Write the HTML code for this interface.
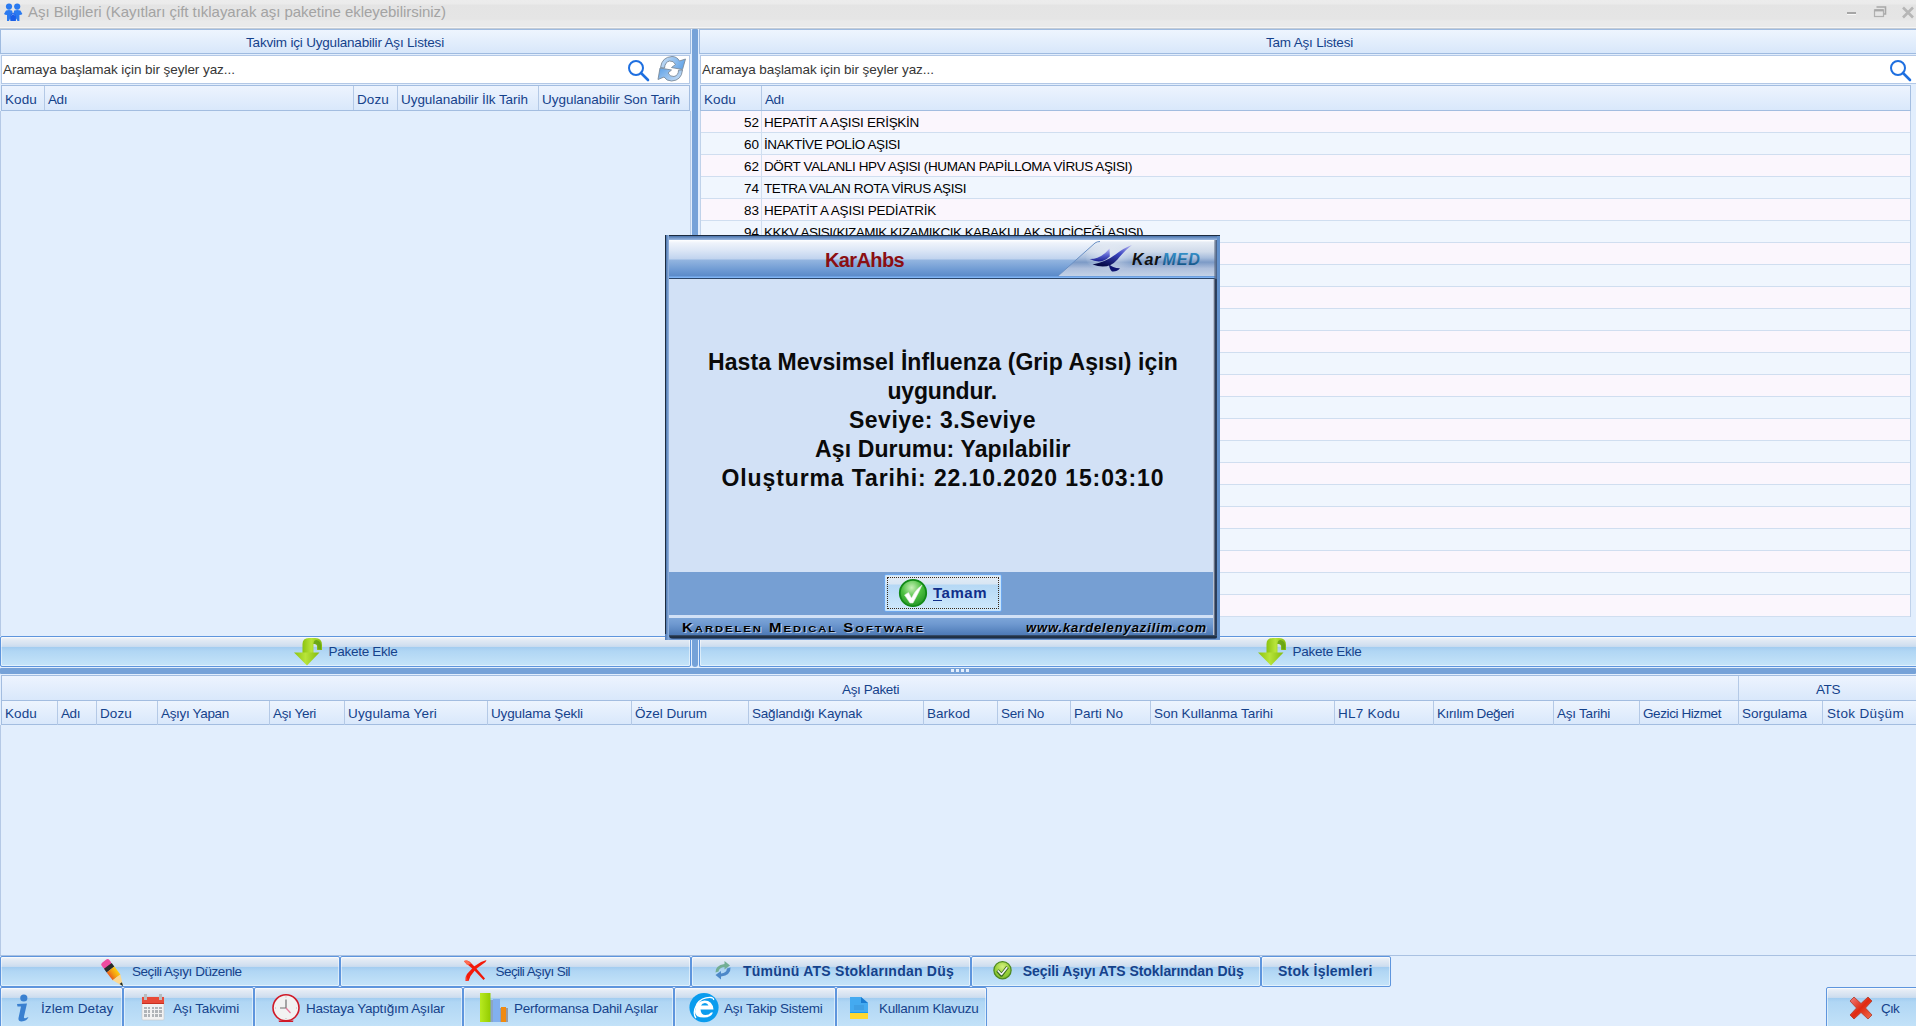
<!DOCTYPE html>
<html><head><meta charset="utf-8"><style>
*{margin:0;padding:0;box-sizing:border-box}
html,body{width:1918px;height:1026px;overflow:hidden;background:#ffffff;font-family:"Liberation Sans",sans-serif;}
.a{position:absolute}
.tx{white-space:nowrap}
#app{position:absolute;left:0;top:0;width:1916px;height:1026px;background:#e2eefd;overflow:hidden}
.hdr{background:linear-gradient(#eef5fe,#d8e7fa);border:1px solid #9fbbe0;}
.search{background:#fff;border:1px solid #b3c8e6;}
.gh{background:linear-gradient(#edf4fe,#d9e8fb);border:1px solid #a3bde0;}
.sep{position:absolute;width:1px;background:#b4c9e6}
.btn{border:1px solid #5e95dd;border-radius:2px;background:linear-gradient(#f2f5fa 0,#e2eaf4 3px,#d2e0f0 8px,#c6daef 10px,#a2ccf0 10px,#b0d6f4 14px,#c6e4f9 100%);box-shadow:inset 0 0 0 1px rgba(255,255,255,0.5)}
.split{background:#76a2d8}
</style></head><body><div id="app">
<div class="a" style="left:0px;top:0px;width:1916px;height:29px;background:linear-gradient(#ececec 0px,#ebebeb 4px,#e4e4e4 5px,#e5e5e5 19px,#eaeaea 21px,#eaeaea 27px,#f5f5f5 27px,#f5f5f5 28px,#c4ccd6 28px)"></div>
<svg class="a" style="left:2px;top:2px" width="24" height="22" viewBox="0 0 24 22">
<g fill="#2a7af0">
<circle cx="7" cy="4.6" r="3.1"/><circle cx="15.2" cy="4.6" r="3.1"/>
<path d="M2 12 L4 8.5 Q7 7.6 10 8.5 L10.5 10 L10.5 19 L8.8 19 L8 16.5 L7 19 L5 19 L5 13 L3.2 12.8Z"/>
<path d="M20.4 12 L18.4 8.5 Q15.2 7.6 12.2 8.5 L11.8 10 L11.8 19 L13.4 19 L14.4 16.5 L15.4 19 L17.4 19 L17.4 13 L19.2 12.8Z"/>
<path d="M8.5 13 L11.1 10.5 L13.8 13 L13.8 19 L8.5 19Z" fill="#1a5ee8"/>
<path d="M9.5 13.5 L11.1 11.8 L12.8 13.5" fill="none" stroke="#9ac0f8" stroke-width="0.6"/>
</g></svg>
<div class="a tx" style="left:28px;top:4.30px;font-size:15px;line-height:15px;color:#a3a3a3;font-weight:normal;font-style:normal;letter-spacing:-0.043px;">Aşı Bilgileri (Kayıtları çift tıklayarak aşı paketine ekleyebilirsiniz)</div>
<div class="a" style="left:1847px;top:12px;width:9px;height:2px;background:#a6a6a6"></div>
<div class="a" style="left:1847px;top:14px;width:9px;height:1px;background:#f8f8f8"></div>
<svg class="a" style="left:1873px;top:6px" width="14" height="12" viewBox="0 0 14 12"><path d="M3.5 1 L12.5 1 L12.5 8 L10.5 8" fill="none" stroke="#a8a8a8" stroke-width="1.6"/><rect x="1.5" y="4" width="9" height="6.5" fill="none" stroke="#b0b0b0" stroke-width="1.2"/><rect x="1.5" y="3.2" width="9" height="2.2" fill="#a8a8a8"/></svg>
<svg class="a" style="left:1901px;top:6px" width="14" height="13" viewBox="0 0 14 13"><path d="M2 1.5 L12 11.5 M12 1.5 L2 11.5" stroke="#b6b6b6" stroke-width="2.6"/></svg>
<div class="a hdr" style="left:0px;top:29px;width:691px;height:25px;"></div>
<div class="a tx" style="left:246px;top:35.57px;font-size:13.5px;line-height:13.5px;color:#15428b;font-weight:normal;font-style:normal;letter-spacing:-0.191px;">Takvim içi Uygulanabilir Aşı Listesi</div>
<div class="a search" style="left:1px;top:55px;width:689px;height:29px;"></div>
<div class="a tx" style="left:3px;top:62.57px;font-size:13.5px;line-height:13.5px;color:#363636;font-weight:normal;font-style:normal;letter-spacing:-0.056px;">Aramaya başlamak için bir şeyler yaz...</div>
<svg class="a" style="left:627px;top:59px" width="24" height="24" viewBox="0 0 24 24">
<circle cx="9" cy="9" r="7" fill="none" stroke="#1e6fe0" stroke-width="2"/>
<path d="M14 14 L21 21" stroke="#1e6fe0" stroke-width="2.6" stroke-linecap="round"/></svg>
<svg class="a" style="left:652px;top:52px" width="40" height="34" viewBox="0 0 40 34">
<defs><linearGradient id="rg" x1="0" y1="0" x2="1" y2="0.3"><stop offset="0" stop-color="#cfe2f6"/><stop offset="1" stop-color="#6aa8e8"/></linearGradient>
<linearGradient id="rg2" x1="1" y1="1" x2="0" y2="0.3"><stop offset="0" stop-color="#cfe2f6"/><stop offset="1" stop-color="#6aa8e8"/></linearGradient></defs>
<path d="M8.5 15.5 Q10 5 20 4.5 Q25 4.5 27.5 9 L33.5 7 L30.5 17.5 L19.5 15.5 L23.5 12.5 Q21.5 8.5 17.5 9 Q13 10 12.5 16 Z" fill="url(#rg)" stroke="#7a8a9a" stroke-width="0.9"/>
<path d="M30.5 18 Q29.5 28.5 19.5 29 Q14.5 29 12 25 L6 27.5 L8 16 L19.5 18 L16 21 Q18 25 22 24.5 Q26.5 23.5 26.5 18.2 Z" fill="url(#rg2)" stroke="#7a8a9a" stroke-width="0.9"/>
</svg>
<div class="a gh" style="left:1px;top:85px;width:689px;height:26px"><div class="sep" style="left:42px;top:0;height:24px"></div><div class="sep" style="left:351px;top:0;height:24px"></div><div class="sep" style="left:395px;top:0;height:24px"></div><div class="sep" style="left:536px;top:0;height:24px"></div></div>
<div class="a tx" style="left:5px;top:92.57px;font-size:13.5px;line-height:13.5px;color:#15428b;font-weight:normal;font-style:normal;letter-spacing:0.113px;">Kodu</div>
<div class="a tx" style="left:48px;top:92.57px;font-size:13.5px;line-height:13.5px;color:#15428b;font-weight:normal;font-style:normal;letter-spacing:-0.422px;">Adı</div>
<div class="a tx" style="left:357px;top:92.57px;font-size:13.5px;line-height:13.5px;color:#15428b;font-weight:normal;font-style:normal;letter-spacing:0.117px;">Dozu</div>
<div class="a tx" style="left:401px;top:92.57px;font-size:13.5px;line-height:13.5px;color:#15428b;font-weight:normal;font-style:normal;letter-spacing:-0.049px;">Uygulanabilir İlk Tarih</div>
<div class="a tx" style="left:542px;top:92.57px;font-size:13.5px;line-height:13.5px;color:#15428b;font-weight:normal;font-style:normal;letter-spacing:-0.029px;">Uygulanabilir Son Tarih</div>
<div class="a" style="left:0px;top:111px;width:1px;height:525px;background:#b5c9e6"></div>
<div class="a" style="left:690px;top:111px;width:1px;height:525px;background:#b8cce6"></div>
<div class="a" style="left:692px;top:29px;width:6px;height:638px;background:#76a2d8;border-radius:1px 1px 3px 3px"></div>
<div class="a hdr" style="left:699px;top:29px;width:1218px;height:25px;border-right:none"></div>
<div class="a tx" style="left:1266px;top:35.57px;font-size:13.5px;line-height:13.5px;color:#15428b;font-weight:normal;font-style:normal;letter-spacing:-0.203px;">Tam Aşı Listesi</div>
<div class="a search" style="left:700px;top:55px;width:1217px;height:29px;border-right:none"></div>
<div class="a tx" style="left:702px;top:62.57px;font-size:13.5px;line-height:13.5px;color:#363636;font-weight:normal;font-style:normal;letter-spacing:-0.056px;">Aramaya başlamak için bir şeyler yaz...</div>
<svg class="a" style="left:1889px;top:59px" width="24" height="24" viewBox="0 0 24 24">
<circle cx="9" cy="9" r="7" fill="none" stroke="#1e6fe0" stroke-width="2"/>
<path d="M14 14 L21 21" stroke="#1e6fe0" stroke-width="2.6" stroke-linecap="round"/></svg>
<div class="a gh" style="left:700px;top:85px;width:1211px;height:26px"><div class="sep" style="left:60px;top:0;height:24px"></div></div>
<div class="a tx" style="left:704px;top:92.57px;font-size:13.5px;line-height:13.5px;color:#15428b;font-weight:normal;font-style:normal;letter-spacing:0.113px;">Kodu</div>
<div class="a tx" style="left:765px;top:92.57px;font-size:13.5px;line-height:13.5px;color:#15428b;font-weight:normal;font-style:normal;letter-spacing:-0.422px;">Adı</div>
<div class="a" style="left:700px;top:111px;width:1px;height:506px;background:#c0d2ea"></div>
<div class="a" style="left:1910px;top:111px;width:1px;height:506px;background:#c0d2ea"></div>
<div class="a" style="left:701px;top:111px;width:1209px;height:21px;background:#fbf6fd"></div>
<div class="a" style="left:701px;top:132px;width:1209px;height:1px;background:#d0def0"></div>
<div class="a" style="left:761px;top:111px;width:1px;height:21px;background:#d0def0"></div>
<div class="a tx" style="left:743.96875px;top:115.57px;font-size:13.5px;line-height:13.5px;color:#000;font-weight:normal;font-style:normal;letter-spacing:0.000px;">52</div>
<div class="a tx" style="left:764px;top:115.57px;font-size:13.5px;line-height:13.5px;color:#000;font-weight:normal;font-style:normal;letter-spacing:-0.272px;">HEPATİT A AŞISI ERİŞKİN</div>
<div class="a" style="left:701px;top:133px;width:1209px;height:21px;background:#f0f6fe"></div>
<div class="a" style="left:701px;top:154px;width:1209px;height:1px;background:#d0def0"></div>
<div class="a" style="left:761px;top:133px;width:1px;height:21px;background:#d0def0"></div>
<div class="a tx" style="left:743.96875px;top:137.57px;font-size:13.5px;line-height:13.5px;color:#000;font-weight:normal;font-style:normal;letter-spacing:0.000px;">60</div>
<div class="a tx" style="left:764px;top:137.57px;font-size:13.5px;line-height:13.5px;color:#000;font-weight:normal;font-style:normal;letter-spacing:-0.401px;">İNAKTİVE POLİO AŞISI</div>
<div class="a" style="left:701px;top:155px;width:1209px;height:21px;background:#fbf6fd"></div>
<div class="a" style="left:701px;top:176px;width:1209px;height:1px;background:#d0def0"></div>
<div class="a" style="left:761px;top:155px;width:1px;height:21px;background:#d0def0"></div>
<div class="a tx" style="left:743.96875px;top:159.57px;font-size:13.5px;line-height:13.5px;color:#000;font-weight:normal;font-style:normal;letter-spacing:0.000px;">62</div>
<div class="a tx" style="left:764px;top:159.57px;font-size:13.5px;line-height:13.5px;color:#000;font-weight:normal;font-style:normal;letter-spacing:-0.391px;">DÖRT VALANLI HPV AŞISI (HUMAN PAPİLLOMA VİRUS AŞISI)</div>
<div class="a" style="left:701px;top:177px;width:1209px;height:21px;background:#f0f6fe"></div>
<div class="a" style="left:701px;top:198px;width:1209px;height:1px;background:#d0def0"></div>
<div class="a" style="left:761px;top:177px;width:1px;height:21px;background:#d0def0"></div>
<div class="a tx" style="left:743.96875px;top:181.57px;font-size:13.5px;line-height:13.5px;color:#000;font-weight:normal;font-style:normal;letter-spacing:0.000px;">74</div>
<div class="a tx" style="left:764px;top:181.57px;font-size:13.5px;line-height:13.5px;color:#000;font-weight:normal;font-style:normal;letter-spacing:-0.376px;">TETRA VALAN ROTA VİRUS AŞISI</div>
<div class="a" style="left:701px;top:199px;width:1209px;height:21px;background:#fbf6fd"></div>
<div class="a" style="left:701px;top:220px;width:1209px;height:1px;background:#d0def0"></div>
<div class="a" style="left:761px;top:199px;width:1px;height:21px;background:#d0def0"></div>
<div class="a tx" style="left:743.96875px;top:203.57px;font-size:13.5px;line-height:13.5px;color:#000;font-weight:normal;font-style:normal;letter-spacing:0.000px;">83</div>
<div class="a tx" style="left:764px;top:203.57px;font-size:13.5px;line-height:13.5px;color:#000;font-weight:normal;font-style:normal;letter-spacing:-0.220px;">HEPATİT A AŞISI PEDİATRİK</div>
<div class="a" style="left:701px;top:221px;width:1209px;height:21px;background:#f0f6fe"></div>
<div class="a" style="left:701px;top:242px;width:1209px;height:1px;background:#d0def0"></div>
<div class="a" style="left:761px;top:221px;width:1px;height:21px;background:#d0def0"></div>
<div class="a tx" style="left:743.96875px;top:225.57px;font-size:13.5px;line-height:13.5px;color:#000;font-weight:normal;font-style:normal;letter-spacing:0.000px;">94</div>
<div class="a tx" style="left:764px;top:225.57px;font-size:13.5px;line-height:13.5px;color:#000;font-weight:normal;font-style:normal;letter-spacing:-0.514px;">KKKV AŞISI(KIZAMIK KIZAMIKÇIK KABAKULAK SUÇİÇEĞİ AŞISI)</div>
<div class="a" style="left:701px;top:243px;width:1209px;height:21px;background:#fbf6fd"></div>
<div class="a" style="left:701px;top:264px;width:1209px;height:1px;background:#d0def0"></div>
<div class="a" style="left:761px;top:243px;width:1px;height:21px;background:#d0def0"></div>
<div class="a" style="left:701px;top:265px;width:1209px;height:21px;background:#f0f6fe"></div>
<div class="a" style="left:701px;top:286px;width:1209px;height:1px;background:#d0def0"></div>
<div class="a" style="left:761px;top:265px;width:1px;height:21px;background:#d0def0"></div>
<div class="a" style="left:701px;top:287px;width:1209px;height:21px;background:#fbf6fd"></div>
<div class="a" style="left:701px;top:308px;width:1209px;height:1px;background:#d0def0"></div>
<div class="a" style="left:761px;top:287px;width:1px;height:21px;background:#d0def0"></div>
<div class="a" style="left:701px;top:309px;width:1209px;height:21px;background:#f0f6fe"></div>
<div class="a" style="left:701px;top:330px;width:1209px;height:1px;background:#d0def0"></div>
<div class="a" style="left:761px;top:309px;width:1px;height:21px;background:#d0def0"></div>
<div class="a" style="left:701px;top:331px;width:1209px;height:21px;background:#fbf6fd"></div>
<div class="a" style="left:701px;top:352px;width:1209px;height:1px;background:#d0def0"></div>
<div class="a" style="left:761px;top:331px;width:1px;height:21px;background:#d0def0"></div>
<div class="a" style="left:701px;top:353px;width:1209px;height:21px;background:#f0f6fe"></div>
<div class="a" style="left:701px;top:374px;width:1209px;height:1px;background:#d0def0"></div>
<div class="a" style="left:761px;top:353px;width:1px;height:21px;background:#d0def0"></div>
<div class="a" style="left:701px;top:375px;width:1209px;height:21px;background:#fbf6fd"></div>
<div class="a" style="left:701px;top:396px;width:1209px;height:1px;background:#d0def0"></div>
<div class="a" style="left:761px;top:375px;width:1px;height:21px;background:#d0def0"></div>
<div class="a" style="left:701px;top:397px;width:1209px;height:21px;background:#f0f6fe"></div>
<div class="a" style="left:701px;top:418px;width:1209px;height:1px;background:#d0def0"></div>
<div class="a" style="left:761px;top:397px;width:1px;height:21px;background:#d0def0"></div>
<div class="a" style="left:701px;top:419px;width:1209px;height:21px;background:#fbf6fd"></div>
<div class="a" style="left:701px;top:440px;width:1209px;height:1px;background:#d0def0"></div>
<div class="a" style="left:761px;top:419px;width:1px;height:21px;background:#d0def0"></div>
<div class="a" style="left:701px;top:441px;width:1209px;height:21px;background:#f0f6fe"></div>
<div class="a" style="left:701px;top:462px;width:1209px;height:1px;background:#d0def0"></div>
<div class="a" style="left:761px;top:441px;width:1px;height:21px;background:#d0def0"></div>
<div class="a" style="left:701px;top:463px;width:1209px;height:21px;background:#fbf6fd"></div>
<div class="a" style="left:701px;top:484px;width:1209px;height:1px;background:#d0def0"></div>
<div class="a" style="left:761px;top:463px;width:1px;height:21px;background:#d0def0"></div>
<div class="a" style="left:701px;top:485px;width:1209px;height:21px;background:#f0f6fe"></div>
<div class="a" style="left:701px;top:506px;width:1209px;height:1px;background:#d0def0"></div>
<div class="a" style="left:761px;top:485px;width:1px;height:21px;background:#d0def0"></div>
<div class="a" style="left:701px;top:507px;width:1209px;height:21px;background:#fbf6fd"></div>
<div class="a" style="left:701px;top:528px;width:1209px;height:1px;background:#d0def0"></div>
<div class="a" style="left:761px;top:507px;width:1px;height:21px;background:#d0def0"></div>
<div class="a" style="left:701px;top:529px;width:1209px;height:21px;background:#f0f6fe"></div>
<div class="a" style="left:701px;top:550px;width:1209px;height:1px;background:#d0def0"></div>
<div class="a" style="left:761px;top:529px;width:1px;height:21px;background:#d0def0"></div>
<div class="a" style="left:701px;top:551px;width:1209px;height:21px;background:#fbf6fd"></div>
<div class="a" style="left:701px;top:572px;width:1209px;height:1px;background:#d0def0"></div>
<div class="a" style="left:761px;top:551px;width:1px;height:21px;background:#d0def0"></div>
<div class="a" style="left:701px;top:573px;width:1209px;height:21px;background:#f0f6fe"></div>
<div class="a" style="left:701px;top:594px;width:1209px;height:1px;background:#d0def0"></div>
<div class="a" style="left:761px;top:573px;width:1px;height:21px;background:#d0def0"></div>
<div class="a" style="left:701px;top:595px;width:1209px;height:21px;background:#fbf6fd"></div>
<div class="a" style="left:701px;top:616px;width:1209px;height:1px;background:#d0def0"></div>
<div class="a" style="left:761px;top:595px;width:1px;height:21px;background:#d0def0"></div>
<div class="a btn" style="left:0px;top:636px;width:691px;height:31px;"></div>
<svg class="a" style="left:293px;top:637px" width="30" height="30" viewBox="0 0 30 30">
<defs><linearGradient id="ga293" x1="0" y1="0" x2="1" y2="0"><stop offset="0" stop-color="#8cc410"/><stop offset="0.45" stop-color="#b8e43a"/><stop offset="1" stop-color="#84bc0c"/></linearGradient></defs>
<path d="M9.5 16 L9.5 7 Q9.5 1 16 1 L22 1 Q29 1 29 8 L29 13 L24 13 L24 9.5 Q24 7 21.5 7 L20.5 7 L20.5 16 Z" fill="url(#ga293)"/>
<path d="M20.5 7 Q20.5 3 23.5 3 Q28 4 28 8.5 L28 12.5 L24.5 12.5 L24.5 9.5 Q24.5 7 21.5 7 Z" fill="#5e9a14" opacity="0.75"/>
<path d="M1 15.5 L26.5 15.5 L14 28.5 Z" fill="url(#ga293)"/>
</svg>
<div class="a tx" style="left:328.5px;top:644.57px;font-size:13.5px;line-height:13.5px;color:#15428b;font-weight:normal;font-style:normal;letter-spacing:-0.278px;">Pakete Ekle</div>
<div class="a btn" style="left:699px;top:636px;width:1218px;height:31px;border-right:none;border-radius:2px 0 0 2px"></div>
<svg class="a" style="left:1257px;top:637px" width="30" height="30" viewBox="0 0 30 30">
<defs><linearGradient id="ga1257" x1="0" y1="0" x2="1" y2="0"><stop offset="0" stop-color="#8cc410"/><stop offset="0.45" stop-color="#b8e43a"/><stop offset="1" stop-color="#84bc0c"/></linearGradient></defs>
<path d="M9.5 16 L9.5 7 Q9.5 1 16 1 L22 1 Q29 1 29 8 L29 13 L24 13 L24 9.5 Q24 7 21.5 7 L20.5 7 L20.5 16 Z" fill="url(#ga1257)"/>
<path d="M20.5 7 Q20.5 3 23.5 3 Q28 4 28 8.5 L28 12.5 L24.5 12.5 L24.5 9.5 Q24.5 7 21.5 7 Z" fill="#5e9a14" opacity="0.75"/>
<path d="M1 15.5 L26.5 15.5 L14 28.5 Z" fill="url(#ga1257)"/>
</svg>
<div class="a tx" style="left:1292.5px;top:644.57px;font-size:13.5px;line-height:13.5px;color:#15428b;font-weight:normal;font-style:normal;letter-spacing:-0.278px;">Pakete Ekle</div>
<div class="a" style="left:0px;top:668px;width:1916px;height:6px;background:#76a2d8;border-radius:1px"></div>
<div class="a" style="left:951px;top:669px;width:3px;height:3px;background:#e4eefb"></div>
<div class="a" style="left:956px;top:669px;width:3px;height:3px;background:#e4eefb"></div>
<div class="a" style="left:961px;top:669px;width:3px;height:3px;background:#e4eefb"></div>
<div class="a" style="left:966px;top:669px;width:3px;height:3px;background:#e4eefb"></div>
<div class="a gh" style="left:1px;top:675px;width:1915px;height:26px;border-right:none"></div>
<div class="a" style="left:1738px;top:676px;width:1px;height:25px;background:#b4c9e6"></div>
<div class="a tx" style="left:842px;top:682.57px;font-size:13.5px;line-height:13.5px;color:#15428b;font-weight:normal;font-style:normal;letter-spacing:-0.378px;">Aşı Paketi</div>
<div class="a tx" style="left:1816px;top:682.57px;font-size:13.5px;line-height:13.5px;color:#15428b;font-weight:normal;font-style:normal;letter-spacing:-0.417px;">ATS</div>
<div class="a gh" style="left:1px;top:700px;width:1915px;height:25px;border-right:none"></div>
<div class="a" style="left:57px;top:701px;width:1px;height:24px;background:#b4c9e6"></div>
<div class="a tx" style="left:5px;top:706.57px;font-size:13.5px;line-height:13.5px;color:#15428b;font-weight:normal;font-style:normal;letter-spacing:0.113px;">Kodu</div>
<div class="a" style="left:96px;top:701px;width:1px;height:24px;background:#b4c9e6"></div>
<div class="a tx" style="left:61px;top:706.57px;font-size:13.5px;line-height:13.5px;color:#15428b;font-weight:normal;font-style:normal;letter-spacing:-0.422px;">Adı</div>
<div class="a" style="left:157px;top:701px;width:1px;height:24px;background:#b4c9e6"></div>
<div class="a tx" style="left:100px;top:706.57px;font-size:13.5px;line-height:13.5px;color:#15428b;font-weight:normal;font-style:normal;letter-spacing:0.117px;">Dozu</div>
<div class="a" style="left:269px;top:701px;width:1px;height:24px;background:#b4c9e6"></div>
<div class="a tx" style="left:161px;top:706.57px;font-size:13.5px;line-height:13.5px;color:#15428b;font-weight:normal;font-style:normal;letter-spacing:-0.324px;">Aşıyı Yapan</div>
<div class="a" style="left:344px;top:701px;width:1px;height:24px;background:#b4c9e6"></div>
<div class="a tx" style="left:273px;top:706.57px;font-size:13.5px;line-height:13.5px;color:#15428b;font-weight:normal;font-style:normal;letter-spacing:-0.348px;">Aşı Yeri</div>
<div class="a" style="left:487px;top:701px;width:1px;height:24px;background:#b4c9e6"></div>
<div class="a tx" style="left:348px;top:706.57px;font-size:13.5px;line-height:13.5px;color:#15428b;font-weight:normal;font-style:normal;letter-spacing:0.147px;">Uygulama Yeri</div>
<div class="a" style="left:631px;top:701px;width:1px;height:24px;background:#b4c9e6"></div>
<div class="a tx" style="left:491px;top:706.57px;font-size:13.5px;line-height:13.5px;color:#15428b;font-weight:normal;font-style:normal;letter-spacing:-0.131px;">Uygulama Şekli</div>
<div class="a" style="left:748px;top:701px;width:1px;height:24px;background:#b4c9e6"></div>
<div class="a tx" style="left:635px;top:706.57px;font-size:13.5px;line-height:13.5px;color:#15428b;font-weight:normal;font-style:normal;letter-spacing:-0.005px;">Özel Durum</div>
<div class="a" style="left:923px;top:701px;width:1px;height:24px;background:#b4c9e6"></div>
<div class="a tx" style="left:752px;top:706.57px;font-size:13.5px;line-height:13.5px;color:#15428b;font-weight:normal;font-style:normal;letter-spacing:-0.199px;">Sağlandığı Kaynak</div>
<div class="a" style="left:997px;top:701px;width:1px;height:24px;background:#b4c9e6"></div>
<div class="a tx" style="left:927px;top:706.57px;font-size:13.5px;line-height:13.5px;color:#15428b;font-weight:normal;font-style:normal;letter-spacing:0.034px;">Barkod</div>
<div class="a" style="left:1070px;top:701px;width:1px;height:24px;background:#b4c9e6"></div>
<div class="a tx" style="left:1001px;top:706.57px;font-size:13.5px;line-height:13.5px;color:#15428b;font-weight:normal;font-style:normal;letter-spacing:-0.290px;">Seri No</div>
<div class="a" style="left:1150px;top:701px;width:1px;height:24px;background:#b4c9e6"></div>
<div class="a tx" style="left:1074px;top:706.57px;font-size:13.5px;line-height:13.5px;color:#15428b;font-weight:normal;font-style:normal;letter-spacing:0.027px;">Parti No</div>
<div class="a" style="left:1334px;top:701px;width:1px;height:24px;background:#b4c9e6"></div>
<div class="a tx" style="left:1154px;top:706.57px;font-size:13.5px;line-height:13.5px;color:#15428b;font-weight:normal;font-style:normal;letter-spacing:-0.046px;">Son Kullanma Tarihi</div>
<div class="a" style="left:1433px;top:701px;width:1px;height:24px;background:#b4c9e6"></div>
<div class="a tx" style="left:1338px;top:706.57px;font-size:13.5px;line-height:13.5px;color:#15428b;font-weight:normal;font-style:normal;letter-spacing:0.240px;">HL7 Kodu</div>
<div class="a" style="left:1553px;top:701px;width:1px;height:24px;background:#b4c9e6"></div>
<div class="a tx" style="left:1437px;top:706.57px;font-size:13.5px;line-height:13.5px;color:#15428b;font-weight:normal;font-style:normal;letter-spacing:-0.396px;">Kırılım Değeri</div>
<div class="a" style="left:1639px;top:701px;width:1px;height:24px;background:#b4c9e6"></div>
<div class="a tx" style="left:1557px;top:706.57px;font-size:13.5px;line-height:13.5px;color:#15428b;font-weight:normal;font-style:normal;letter-spacing:-0.228px;">Aşı Tarihi</div>
<div class="a" style="left:1738px;top:701px;width:1px;height:24px;background:#b4c9e6"></div>
<div class="a tx" style="left:1643px;top:706.57px;font-size:13.5px;line-height:13.5px;color:#15428b;font-weight:normal;font-style:normal;letter-spacing:-0.406px;">Gezici Hizmet</div>
<div class="a" style="left:1822px;top:701px;width:1px;height:24px;background:#b4c9e6"></div>
<div class="a tx" style="left:1742px;top:706.57px;font-size:13.5px;line-height:13.5px;color:#15428b;font-weight:normal;font-style:normal;letter-spacing:-0.036px;">Sorgulama</div>
<div class="a tx" style="left:1827px;top:706.57px;font-size:13.5px;line-height:13.5px;color:#15428b;font-weight:normal;font-style:normal;letter-spacing:0.345px;">Stok Düşüm</div>
<div class="a" style="left:0px;top:725px;width:1px;height:230px;background:#b5c9e6"></div>
<div class="a" style="left:0px;top:955px;width:1916px;height:1px;background:#a9c1e2"></div>
<div class="a btn" style="left:0px;top:956px;width:340px;height:31px;"></div>
<div class="a btn" style="left:340px;top:956px;width:351px;height:31px;"></div>
<div class="a btn" style="left:691px;top:956px;width:280px;height:31px;"></div>
<div class="a btn" style="left:971px;top:956px;width:290px;height:31px;"></div>
<div class="a btn" style="left:1261px;top:956px;width:130px;height:31px;"></div>
<div class="a btn" style="left:0px;top:987px;width:123px;height:45px;"></div>
<div class="a btn" style="left:123px;top:987px;width:131px;height:45px;"></div>
<div class="a btn" style="left:254px;top:987px;width:209px;height:45px;"></div>
<div class="a btn" style="left:463px;top:987px;width:211px;height:45px;"></div>
<div class="a btn" style="left:674px;top:987px;width:162px;height:45px;"></div>
<div class="a btn" style="left:836px;top:987px;width:151px;height:45px;"></div>
<div class="a btn" style="left:1826px;top:987px;width:95px;height:45px;"></div>
<div class="a tx" style="left:132px;top:964.57px;font-size:13.5px;line-height:13.5px;color:#15428b;font-weight:normal;font-style:normal;letter-spacing:-0.449px;">Seçili Aşıyı Düzenle</div>
<div class="a tx" style="left:495.6px;top:964.57px;font-size:13.5px;line-height:13.5px;color:#15428b;font-weight:normal;font-style:normal;letter-spacing:-0.601px;">Seçili Aşıyı Sil</div>
<div class="a tx" style="left:743px;top:964.15px;font-size:14px;line-height:14px;color:#15428b;font-weight:bold;font-style:normal;letter-spacing:0.240px;">Tümünü ATS Stoklarından Düş</div>
<div class="a tx" style="left:1022.7px;top:964.15px;font-size:14px;line-height:14px;color:#15428b;font-weight:bold;font-style:normal;letter-spacing:-0.053px;">Seçili Aşıyı ATS Stoklarından Düş</div>
<div class="a tx" style="left:1278px;top:964.15px;font-size:14px;line-height:14px;color:#15428b;font-weight:bold;font-style:normal;letter-spacing:0.255px;">Stok İşlemleri</div>
<div class="a tx" style="left:41px;top:1001.57px;font-size:13.5px;line-height:13.5px;color:#15428b;font-weight:normal;font-style:normal;letter-spacing:0.109px;">İzlem Detay</div>
<div class="a tx" style="left:173px;top:1001.57px;font-size:13.5px;line-height:13.5px;color:#15428b;font-weight:normal;font-style:normal;letter-spacing:-0.183px;">Aşı Takvimi</div>
<div class="a tx" style="left:306px;top:1001.57px;font-size:13.5px;line-height:13.5px;color:#15428b;font-weight:normal;font-style:normal;letter-spacing:-0.222px;">Hastaya Yaptığım Aşılar</div>
<div class="a tx" style="left:514px;top:1001.57px;font-size:13.5px;line-height:13.5px;color:#15428b;font-weight:normal;font-style:normal;letter-spacing:-0.236px;">Performansa Dahil Aşılar</div>
<div class="a tx" style="left:724px;top:1001.57px;font-size:13.5px;line-height:13.5px;color:#15428b;font-weight:normal;font-style:normal;letter-spacing:-0.232px;">Aşı Takip Sistemi</div>
<div class="a tx" style="left:879px;top:1001.57px;font-size:13.5px;line-height:13.5px;color:#15428b;font-weight:normal;font-style:normal;letter-spacing:-0.309px;">Kullanım Klavuzu</div>
<div class="a tx" style="left:1881px;top:1001.57px;font-size:13.5px;line-height:13.5px;color:#15428b;font-weight:normal;font-style:normal;letter-spacing:-0.750px;">Çık</div>
<svg class="a" style="left:95px;top:955px" width="35" height="35" viewBox="0 0 35 35">
<defs><linearGradient id="pb" x1="0" y1="0" x2="0" y2="1"><stop offset="0" stop-color="#ffcc10"/><stop offset="0.55" stop-color="#f29a12"/><stop offset="1" stop-color="#e85a1a"/></linearGradient></defs>
<g transform="translate(11,8.5) rotate(53)">
<rect x="-3" y="-4.8" width="7" height="9.6" rx="2.2" fill="#ee4aa0"/>
<rect x="3" y="-4.8" width="4.5" height="9.6" fill="#2a2a2a"/>
<rect x="7.5" y="-4.8" width="10" height="9.6" fill="url(#pb)"/>
<path d="M17.5 -4.8 L27 -0.7 L27 0.7 L17.5 4.8Z" fill="#fcd890"/>
<path d="M24.5 -1.4 L28.5 0 L24.5 1.4Z" fill="#1a2a2a"/>
</g></svg>
<svg class="a" style="left:458px;top:955px" width="35" height="35" viewBox="0 0 35 35">
<path d="M6 6.5 Q9 5 12 7 L17 12 L27 23.5 L25.5 25 L16 15 Z" fill="#f01808"/>
<path d="M6 6 Q8 4.5 11 6.5 L13 9 L9 10Z" fill="#ff6a50"/>
<path d="M28.5 5 L27.5 7 L18 14 L12.5 21 Q11 25 10.5 26 L7.5 26 Q7 22 9 19 L16 11.5 L23 7 Z" fill="#f41a0a"/>
<path d="M8 20 Q7 24 8.5 26 L10 26Z" fill="#ff5040" opacity="0.7"/></svg>
<svg class="a" style="left:705px;top:955px" width="35" height="35" viewBox="0 0 35 35">
<path d="M10.5 17.5 Q10 10.5 19.5 9 L19.5 6 L25 10.5 L19.5 14.5 L19.5 12 Q14 12.5 13.5 16.5Z" fill="#72ae94"/>
<path d="M25.5 12.5 Q26 20 16 21.5 L16 24.5 L10.5 20 L16 16 L16 18.5 Q21.5 18 22 13.5Z" fill="#4d88c8"/></svg>
<svg class="a" style="left:985px;top:955px" width="35" height="35" viewBox="0 0 35 35">
<defs><radialGradient id="gck" cx="0.5" cy="0.3" r="0.7"><stop offset="0" stop-color="#d4f080"/><stop offset="0.6" stop-color="#98d03a"/><stop offset="1" stop-color="#80c030"/></radialGradient></defs>
<circle cx="17.5" cy="15.2" r="8.6" fill="url(#gck)" stroke="#4f8a22" stroke-width="1.3"/>
<path d="M12.5 15.5 L16.5 20 L22.5 12" fill="none" stroke="#3a6a20" stroke-width="3.4" stroke-linejoin="round"/>
<path d="M12.8 15.5 L16.5 19.5 L22.3 12.2" fill="none" stroke="#f4f4f4" stroke-width="1.6" stroke-linejoin="round"/></svg>
<svg class="a" style="left:10px;top:988px" width="35" height="38" viewBox="0 0 35 38">
<circle cx="13.8" cy="10" r="3.6" fill="#3a80d0"/>
<path d="M7 16 L17 15.5 L14 28.5 Q13.5 31 16 30 L18.5 29 Q17 33 11.5 33.5 Q8 33.5 8.5 30 L11 18.5 L7.5 18.5Z" fill="#3a80d0"/></svg>
<svg class="a" style="left:136px;top:988px" width="35" height="38" viewBox="0 0 35 38">
<rect x="6" y="9" width="22" height="23" rx="1" fill="#f2f2f2" stroke="#c8c8c8" stroke-width="0.6"/>
<rect x="6" y="9" width="22" height="7" fill="#e84a38"/>
<rect x="6" y="15" width="22" height="1" fill="#c83020"/>
<rect x="8" y="6" width="3" height="6" fill="#b8bcc0"/><rect x="23" y="6" width="3" height="6" fill="#b8bcc0"/>
<g fill="#b0b4b8">
<rect x="8" y="19" width="3" height="2"/><rect x="12" y="19" width="2" height="2"/><rect x="16" y="19" width="2" height="2"/><rect x="19" y="19" width="3" height="2"/><rect x="23" y="19" width="3" height="2"/>
<rect x="8" y="22" width="3" height="3"/><rect x="12" y="22" width="2" height="3"/><rect x="16" y="22" width="2" height="3"/><rect x="19" y="22" width="3" height="3"/><rect x="23" y="22" width="3" height="3"/>
<rect x="8" y="26" width="3" height="3"/><rect x="12" y="26" width="2" height="3"/><rect x="16" y="26" width="2" height="3"/><rect x="19" y="26" width="3" height="3"/><rect x="23" y="26" width="3" height="3"/>
</g></svg>
<svg class="a" style="left:266px;top:988px" width="40" height="38" viewBox="0 0 40 38">
<circle cx="20" cy="19.8" r="13" fill="#f2f2f2" stroke="#d01a28" stroke-width="1.6"/>
<path d="M12.5 32.5 L27.5 32.5 L27 34 L13 34Z" fill="#d01a28"/>
<path d="M20 20 L20 11.5 M20 20 L14 20" stroke="#707070" stroke-width="1.2"/>
<path d="M20 20 L24.5 25" stroke="#e8789a" stroke-width="1.2"/>
<g fill="#bbb"><rect x="19.5" y="8.5" width="1" height="1"/><rect x="19.5" y="30" width="1" height="1"/><rect x="9" y="19.5" width="1" height="1"/><rect x="30" y="19.5" width="1" height="1"/></g></svg>
<svg class="a" style="left:474px;top:988px" width="40" height="38" viewBox="0 0 40 38">
<defs><linearGradient id="gbar" x1="0" x2="1"><stop offset="0" stop-color="#b8ea20"/><stop offset="1" stop-color="#94cc00"/></linearGradient></defs>
<rect x="16" y="12" width="3" height="22" fill="#8aa4c8"/>
<rect x="6" y="5" width="10.5" height="29" fill="url(#gbar)"/>
<rect x="19" y="11" width="7" height="23" fill="#82b0ee"/>
<rect x="26" y="20" width="1.5" height="14" fill="#8aa0c0"/>
<rect x="27" y="19" width="5" height="15" fill="#f08a10"/>
<rect x="32" y="20" width="2" height="14" fill="#9a9aa0"/></svg>
<svg class="a" style="left:684px;top:988px" width="40" height="38" viewBox="0 0 40 38">
<circle cx="20" cy="19.6" r="14.6" fill="#0a9cee"/>
<path d="M11 24 Q11 13 20.5 12.5 Q28.5 12.5 29.5 21.5 L16.5 21.5 Q17 27 21.5 27 Q25 27 27 24.5 L29 24.5 Q27 29.5 20 29.5 Q11 29.5 11 24Z M17 17.5 L24.5 17.5 Q23.5 15 21 15 Q18 15 17 17.5Z" fill="#ffffff"/>
<path d="M12 30 Q8 25 13 16 Q18 9 27 9.5 Q30 10 29.5 12" fill="none" stroke="#ffffff" stroke-width="1.3"/></svg>
<svg class="a" style="left:840px;top:988px" width="40" height="38" viewBox="0 0 40 38">
<path d="M10 9 L21 9 L28 15 L28 31 L10 31Z" fill="#44aaf0"/>
<path d="M21 9 L28 15 L21 15Z" fill="#1a7cd2"/>
<rect x="14" y="17" width="10" height="5" fill="#3c98dc" opacity="0.6"/>
<rect x="10" y="25" width="18" height="6" fill="#ffd830"/>
<rect x="10" y="24" width="18" height="1" fill="#1a9af0"/></svg>
<svg class="a" style="left:1845px;top:993px" width="32" height="30" viewBox="0 0 32 30">
<defs><linearGradient id="gx" x1="0" y1="0" x2="1" y2="1"><stop offset="0" stop-color="#f08080"/><stop offset="0.5" stop-color="#e02a10"/><stop offset="1" stop-color="#f07050"/></linearGradient></defs>
<path d="M5 8 L9 4 L16 10.5 L23 4 L27 8 L20.5 15 L27 22 L23 26 L16 19.5 L9 26 L5 22 L11.5 15Z" fill="url(#gx)" stroke="#b03a2a" stroke-width="0.8"/></svg>
<div class="a" style="left:665px;top:235px;width:555px;height:405px;background:#6f98d0"></div>
<div class="a" style="left:665px;top:235px;width:555px;height:5px;background:linear-gradient(#1d2c40 0,#1d2c40 1px,#4a74ac 1px,#9ab8e2 5px)"></div>
<div class="a" style="left:665px;top:235px;width:4px;height:405px;background:linear-gradient(90deg,#1d2c40 0,#1d2c40 1px,#4a74ac 1px,#9ab8e2 4px)"></div>
<div class="a" style="left:665px;top:634px;width:4px;height:6px;background:linear-gradient(90deg,#4a76b4,#8aaedc)"></div>
<div class="a" style="left:669px;top:240px;width:547px;height:38px;background:linear-gradient(#ffffff 0,#eef3fb 3px,#dde7f6 10px,#c0d3ee 19px,#93b5e0 20px,#6e9ad3 30px,#5b8bc9 36px,#80b4f4 37px)"></div>
<div class="a" style="left:669px;top:278px;width:547px;height:1px;background:#2b4669"></div>
<div class="a tx" style="left:825px;top:250.07px;font-size:20px;line-height:20px;color:#8b0f12;font-weight:bold;font-style:normal;letter-spacing:-0.621px;">KarAhbs</div>
<svg class="a" style="left:1050px;top:240px" width="166" height="38" viewBox="0 0 166 38">
<defs>
<linearGradient id="lt" x1="0" y1="0" x2="0" y2="1"><stop offset="0" stop-color="#e8eef6"/><stop offset="0.3" stop-color="#cfdaea"/><stop offset="0.48" stop-color="#a6bcdc"/><stop offset="0.6" stop-color="#7c9ac6"/><stop offset="0.78" stop-color="#aebfdc"/><stop offset="1" stop-color="#c4d2e6"/></linearGradient>
<radialGradient id="lhl" cx="0.45" cy="0.5" r="0.5"><stop offset="0" stop-color="#ffffff" stop-opacity="0.55"/><stop offset="1" stop-color="#ffffff" stop-opacity="0"/></radialGradient>
<linearGradient id="sw" x1="1" y1="0" x2="0.35" y2="1"><stop offset="0" stop-color="#b4b4f2"/><stop offset="0.45" stop-color="#3a44c0"/><stop offset="1" stop-color="#060a48"/></linearGradient><linearGradient id="sw2" x1="0.5" y1="0" x2="0.5" y2="1"><stop offset="0" stop-color="#c0c0f4"/><stop offset="0.5" stop-color="#5a62d0"/><stop offset="1" stop-color="#1a2090"/></linearGradient>
<linearGradient id="med" x1="0" y1="0" x2="0" y2="1"><stop offset="0" stop-color="#3a9ad4"/><stop offset="1" stop-color="#0e4a7c"/></linearGradient>
</defs>
<path d="M8 36 L45 3 Q47 1.5 50 1.5 L166 1.5 L166 36 Z" fill="url(#lt)"/>
<path d="M8 36 L45 3 Q47 1.5 50 1.5" fill="none" stroke="#6a90c4" stroke-width="1"/>
<ellipse cx="62" cy="18" rx="26" ry="14" fill="url(#lhl)"/>
<path d="M39.5 19 Q50.5 19.5 59.5 8.5 L59.8 16.5 Q51 25 39.5 19Z" fill="url(#sw2)"/>
<path d="M42.5 24.5 Q55.5 22 65.5 14.5 Q73.5 8 82 5 Q74.5 10.5 67.5 19.5 Q58 30.5 42.5 24.5Z" fill="url(#sw)"/>
<path d="M59 24 Q62 28 70 28.3 Q67 32 62 31.5 Q59 29 59 24Z" fill="#0e1470"/>
<text x="82" y="24.7" font-family="Liberation Sans" font-weight="bold" font-style="italic" font-size="16" fill="#101010" letter-spacing="0.9">Kar</text>
<text x="112.5" y="24.7" font-family="Liberation Sans" font-weight="bold" font-style="italic" font-size="16" fill="url(#med)" letter-spacing="0.9">MED</text>
</svg>
<div class="a" style="left:669px;top:279px;width:547px;height:293px;background:#d2e1f6"></div>
<div class="a tx" style="left:708px;top:350.53px;font-size:23px;line-height:23px;color:#0a0a0a;font-weight:bold;font-style:normal;letter-spacing:0.070px;">Hasta Mevsimsel İnfluenza (Grip Aşısı) için</div>
<div class="a tx" style="left:887.5px;top:379.53px;font-size:23px;line-height:23px;color:#0a0a0a;font-weight:bold;font-style:normal;letter-spacing:-0.184px;">uygundur.</div>
<div class="a tx" style="left:849px;top:408.53px;font-size:23px;line-height:23px;color:#0a0a0a;font-weight:bold;font-style:normal;letter-spacing:0.495px;">Seviye: 3.Seviye</div>
<div class="a tx" style="left:815px;top:437.53px;font-size:23px;line-height:23px;color:#0a0a0a;font-weight:bold;font-style:normal;letter-spacing:0.124px;">Aşı Durumu: Yapılabilir</div>
<div class="a tx" style="left:721.5px;top:466.53px;font-size:23px;line-height:23px;color:#0a0a0a;font-weight:bold;font-style:normal;letter-spacing:0.891px;">Oluşturma Tarihi: 22.10.2020 15:03:10</div>
<div class="a" style="left:669px;top:572px;width:547px;height:43px;background:#769fd3"></div>
<div class="a" style="left:669px;top:615px;width:547px;height:3px;background:#d2e1f6"></div>
<div class="a" style="left:669px;top:618px;width:547px;height:18px;background:linear-gradient(#7ca5d8 0,#6f99d0 6px,#5c88c2 12px,#4a76b2 18px)"></div>
<div class="a" style="left:1214px;top:240px;width:3px;height:39px;background:linear-gradient(90deg,rgba(90,100,120,0.35),#5a6e8c 70%,#3e5a86)"></div>
<div class="a" style="left:1213px;top:279px;width:4px;height:358px;background:linear-gradient(90deg,#b4c0d4 0,#b4c0d4 1px,#687082 1px,#687082 2px,#2a3c58 2px,#2c405e 4px)"></div>
<div class="a" style="left:1217px;top:236px;width:3px;height:403px;background:#6391cb"></div>
<div class="a" style="left:669px;top:635px;width:548px;height:4px;background:linear-gradient(#3a5272,#1a2838 50%,#22344e 75%,#4a74b0);border-radius:0 0 2px 4px"></div>
<div class="a tx" style="left:682px;top:621.8px;font-size:12px;line-height:12px;font-weight:bold;color:#000;letter-spacing:1.6px;transform:scaleX(1.245);transform-origin:0 0;text-shadow:1px 1px 0 rgba(255,255,255,0.55)">K<span style="font-size:9px">ARDELEN</span> M<span style="font-size:9px">EDICAL</span> S<span style="font-size:9px">OFTWARE</span></div>
<div class="a tx" style="left:1026px;top:621.00px;font-size:13px;line-height:13px;color:#000;font-weight:bold;font-style:italic;letter-spacing:0.885px;text-shadow:1px 1px 0 rgba(255,255,255,0.5)">www.kardelenyazilim.com</div>
<div class="a" style="left:884px;top:574px;width:118px;height:38px;border:1px solid #6fa8ee;border-radius:2px;background:linear-gradient(#e3ecf6 0,#d9e6f3 9px,#b5d8f5 10px,#cfe9fb 100%);box-shadow:inset 0 0 0 1px #c8e4fb"></div>
<div class="a" style="left:887px;top:577px;width:112px;height:32px;border:1px dotted #3a2a1a"></div>
<svg class="a" style="left:898px;top:578px" width="30" height="30" viewBox="0 0 30 30">
<defs><radialGradient id="gc" cx="0.45" cy="0.3" r="0.75"><stop offset="0" stop-color="#c8f0b8"/><stop offset="0.5" stop-color="#4cc040"/><stop offset="1" stop-color="#1f8f22"/></radialGradient></defs>
<circle cx="15" cy="15" r="13.2" fill="url(#gc)" stroke="#138a18" stroke-width="1.8"/>
<path d="M6.5 17 L10.5 14.5 L13.5 20 Q17 12 24 7 Q21 14 15 25 L12 25Z" fill="#fff" stroke="#d8e8d8" stroke-width="0.6"/>
</svg>
<div class="a tx" style="left:933px;top:585.30px;font-size:15px;line-height:15px;color:#112f8a;font-weight:bold;font-style:normal;letter-spacing:0.516px;">Tamam</div>
<div class="a" style="left:933px;top:600px;width:9px;height:1px;background:#112f8a"></div>
</div></body></html>
